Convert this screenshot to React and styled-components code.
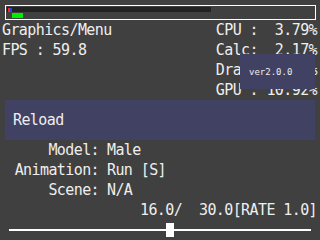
import styled, { createGlobalStyle } from "styled-components";

const GlobalStyle = createGlobalStyle`
  html, body {
    margin: 0;
    padding: 0;
    background: #404040;
  }
  body {
    width: 320px;
    height: 240px;
    overflow: hidden;
    font-family: "DejaVu Sans Mono", "Liberation Mono", monospace;
    color: #eeeeee;
  }
`;

const stats = [
  ["CPU :", "3.79%"],
  ["Calc:", "2.17%"],
  ["Draw:", "0.45%"],
  ["GPU :", "10.92%"],
];

const info = [
  ["Model:", "Male"],
  ["Animation:", "Run [S]"],
  ["Scene:", "N/A"],
];

const App = () => {
  const current = 16.0;
  const total = 30.0;
  return (
    <Screen>
      <GlobalStyle />
      <Meter>
        <LoadBar>
          <Segment color="#ff2020" width={2} />
          <Segment color="#2040ff" width={2} />
        </LoadBar>
        <FpsBar />
      </Meter>

      <Stats>
        <Column>
          <Line>Graphics/Menu</Line>
          <Line>FPS : 59.8</Line>
        </Column>
        <Column align="right">
          {stats.map(([k, v]) => (
            <Line key={k}>{k + v.padStart(7, " ")}</Line>
          ))}
        </Column>
        <Version>ver2.0.0</Version>
      </Stats>

      <ReloadButton>Reload</ReloadButton>

      <Info>
        {info.map(([k, v]) => (
          <InfoRow key={k}>
            <Label>{k}</Label>
            <Value>{v}</Value>
          </InfoRow>
        ))}
        <Rate>{`${current.toFixed(1)}/  ${total.toFixed(1)}[RATE 1.0]`}</Rate>
      </Info>

      <Slider>
        <Track />
        <Thumb style={{ left: `${(current / total) * 100}%` }} />
      </Slider>
    </Screen>
  );
};

const Screen = styled.div`
  width: 320px;
  height: 240px;
  display: flex;
  flex-direction: column;
  font-size: 15px;
  letter-spacing: -0.6px;
`;

const Meter = styled.div`
  margin: 5px 4px 0 5px;
  height: 13px;
  border: 1px solid #ffffff;
  padding: 1px 0 0 1px;
  box-sizing: border-box;
  height: 15px;
  display: flex;
  flex-direction: column;
  gap: 1px;
`;

const LoadBar = styled.div`
  width: 204px;
  height: 5px;
  background: #222222;
  display: flex;
  align-items: flex-end;
  padding-left: 1px;
  box-sizing: border-box;
`;

const Segment = styled.div`
  width: ${(p) => p.width}px;
  height: 4px;
  background: ${(p) => p.color};
`;

const FpsBar = styled.div`
  margin-left: 5px;
  width: 11px;
  height: 5px;
  background: #00ee00;
`;

const Stats = styled.div`
  position: relative;
  display: flex;
  justify-content: space-between;
  padding: 0 3px 0 2px;
  height: 80px;
`;

const Column = styled.div`
  display: flex;
  flex-direction: column;
  text-align: ${(p) => p.align || "left"};
`;

const Line = styled.div`
  height: 20px;
  line-height: 20px;
  white-space: pre;
`;

const Version = styled.div`
  position: absolute;
  left: 240px;
  top: 34px;
  width: 75px;
  height: 35px;
  box-sizing: border-box;
  padding-left: 9px;
  display: flex;
  align-items: center;
  background: #414163;
  font-size: 9px;
  letter-spacing: 0;
`;

const ReloadButton = styled.div`
  margin: 0 5px;
  height: 40px;
  line-height: 40px;
  padding-left: 8px;
  background: #414163;
`;

const Info = styled.div`
  display: flex;
  flex-direction: column;
`;

const InfoRow = styled.div`
  display: flex;
  height: 20px;
  line-height: 20px;
  white-space: pre;
`;

const Label = styled.span`
  width: 99px;
  text-align: right;
`;

const Value = styled.span`
  margin-left: 8px;
`;

const Rate = styled.div`
  height: 20px;
  line-height: 20px;
  white-space: pre;
  text-align: right;
  padding-right: 3px;
`;

const Slider = styled.div`
  position: relative;
  margin: 3px 9px 0 9px;
  height: 14px;
  display: flex;
  align-items: center;
`;

const Track = styled.div`
  width: 100%;
  height: 2px;
  background: #ffffff;
`;

const Thumb = styled.div`
  position: absolute;
  top: 0;
  width: 8px;
  height: 14px;
  margin-left: -4px;
  background: #ffffff;
`;

export default App;
